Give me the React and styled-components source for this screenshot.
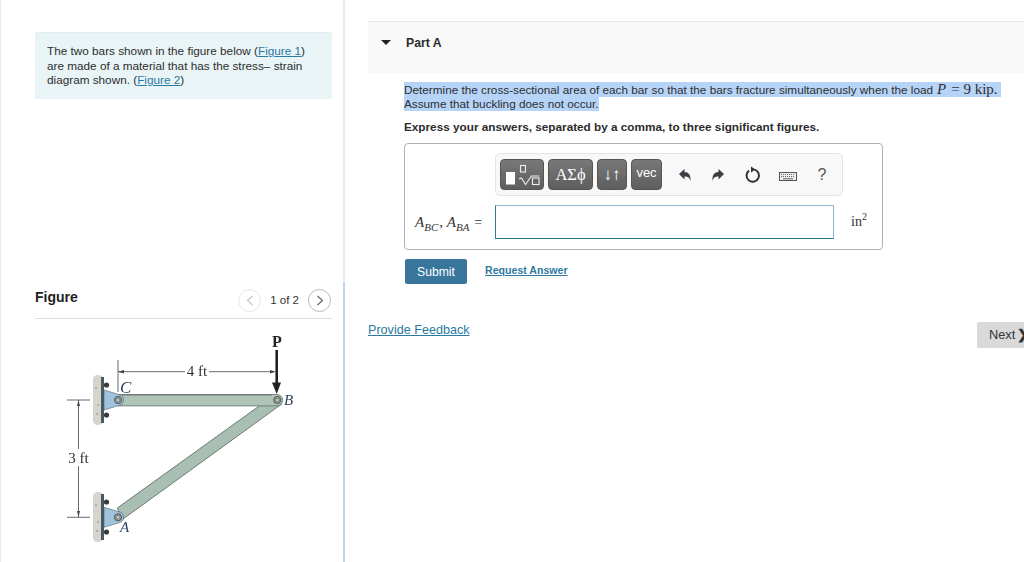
import React from 'react';
import styled, { createGlobalStyle } from 'styled-components';

const GlobalStyle = createGlobalStyle`
  html, body {
    margin: 0;
    height: 100%;
    overflow: hidden;
    background: #fff;
  }
  body {
    font-family: "Liberation Sans", Arial, sans-serif;
    color: #2e2e2e;
  }
`;

const Page = styled.div`
  display: flex;
  width: 1024px;
  height: 562px;
  overflow: hidden;
`;

const LeftPanel = styled.aside`
  box-sizing: border-box;
  width: 343px;
  flex: none;
  padding: 32px 11px 0 34px;
  border-left: 1px solid #e8ebee;
`;

const Divider = styled.div`
  width: 2px;
  flex: none;
  background: linear-gradient(#e8eef4 282px, #c3d4e4 282px);
`;

const Intro = styled.div`
  box-sizing: border-box;
  height: 67px;
  padding: 11px 12px 0;
  background: #e8f4f6;
  border-top: 1px solid #e2eef1;
  font-size: 11.75px;
  line-height: 14.5px;
  white-space: nowrap;
`;

const TextLink = styled.a`
  color: #2a7aa3;
  text-decoration: underline;
`;

const FigureHead = styled.div`
  display: flex;
  align-items: center;
  justify-content: space-between;
  height: 35px;
  margin-top: 182px;
  padding-bottom: 2px;
  border-bottom: 1px solid #dedede;
`;

const FigureTitle = styled.h2`
  margin: 0 0 4px;
  font-size: 14px;
  font-weight: 700;
  color: #222;
`;

const Pager = styled.div`
  display: flex;
  align-items: center;
  gap: 9px;
  margin: 3px 1px 0 0;
  font-size: 11.5px;
  color: #333;
`;

const PagerButton = styled.span`
  display: flex;
  align-items: center;
  justify-content: center;
  width: 23px;
  height: 23px;
  box-sizing: border-box;
  border-radius: 50%;
  border: 1px solid ${(p) => (p.$disabled ? '#e4e4e4' : '#b9b9b9')};
  color: ${(p) => (p.$disabled ? '#c4c4c4' : '#666')};
`;

const Diagram = styled.svg`
  display: block;
  width: 260px;
  height: 232px;
  margin: 11px 0 0 5px;
  filter: blur(0.4px);
`;

const RightPanel = styled.main`
  flex: 1;
  min-width: 0;
  padding: 21px 0 0 23px;
`;

const PartHeader = styled.div`
  display: flex;
  align-items: center;
  gap: 15px;
  padding: 0 0 10px 13px;
  box-sizing: border-box;
  height: 52px;
  background: #f9f9f9;
  border-top: 1px solid #e6e6e6;
`;

const Caret = styled.span`
  width: 0;
  height: 0;
  border-left: 5px solid transparent;
  border-right: 5px solid transparent;
  border-top: 5px solid #222;
`;

const PartTitle = styled.h3`
  margin: 0;
  font-size: 12.2px;
  font-weight: 700;
  color: #2b2b2b;
`;

const PartBody = styled.div`
  padding: 9px 0 0 36px;
  width: 600px;
`;

const Question = styled.p`
  margin: 0;
  width: 620px;
  font-size: 11.75px;
  line-height: 14px;
  white-space: nowrap;
`;

const Selected = styled.span`
  background: #b6d4f8;
  padding: 1px 0;
`;

const MathVar = styled.span`
  font-family: "Liberation Serif", serif;
  font-style: ${(p) => (p.$italic ? 'italic' : 'normal')};
  font-size: 15px;
  margin-left: ${(p) => p.$gap || 0}px;
  padding-right: ${(p) => p.$tail || 0}px;
`;

const Instruction = styled.p`
  margin: 9px 0 0;
  font-size: 11.75px;
  line-height: 14px;
  font-weight: 700;
  color: #2b2b2b;
`;

const AnswerBox = styled.div`
  box-sizing: border-box;
  width: 479px;
  height: 107px;
  margin-top: 9px;
  padding: 9px 14px 0 10px;
  border: 1px solid #b0b0b0;
  border-radius: 4px;
`;

const Toolbar = styled.div`
  box-sizing: border-box;
  display: flex;
  align-items: center;
  width: 348px;
  height: 43px;
  margin-left: 80px;
  padding: 0 4px;
  gap: 4px;
  background: #f8f8f8;
  border: 1px solid #e4e4e4;
  border-radius: 5px;
`;

const ToolButton = styled.span`
  box-sizing: border-box;
  display: flex;
  flex: none;
  align-items: ${(p) => (p.$high ? 'flex-start' : 'center')};
  justify-content: center;
  width: ${(p) => p.$w}px;
  height: 31px;
  padding-top: ${(p) => (p.$high ? 5 : 0)}px;
  border-radius: 4px;
  border: 1px solid #555;
  background: linear-gradient(#787878, #5e5e5e);
  color: #fff;
  font-family: ${(p) => (p.$serif ? '"Liberation Serif", serif' : '"Liberation Sans", sans-serif')};
  font-size: ${(p) => p.$size || 13}px;
`;

const IconSlot = styled.span`
  display: flex;
  flex: none;
  align-items: center;
  justify-content: center;
  width: ${(p) => p.$w}px;
  height: 31px;
  color: #555;
  font-size: 16px;
`;

const KeyboardGlyph = styled.svg`
  margin-top: 4px;
`;

const AnswerRow = styled.div`
  display: flex;
  align-items: center;
  margin-top: 9px;
`;

const AnswerLabel = styled.label`
  width: 80px;
  flex: none;
  white-space: nowrap;
  font-family: "Liberation Serif", serif;
  font-size: 15px;
  color: #333;
`;

const Sub = styled.sub`
  font-size: 11px;
  font-style: italic;
  line-height: 0;
  margin-right: ${(p) => p.$gap || 0}px;
`;

const Eq = styled.span`
  font-size: 14px;
  margin-left: 5px;
`;

const AnswerInput = styled.div`
  box-sizing: border-box;
  width: 339px;
  height: 34px;
  border: 1px solid #2f7a9c;
  border-top-color: #8fb7ca;
  border-right-color: #8fb7ca;
`;

const Unit = styled.span`
  margin-left: 17px;
  font-family: "Liberation Serif", serif;
  font-size: 14px;
  color: #333;
  sup {
    font-size: 10px;
    line-height: 0;
  }
`;

const Actions = styled.div`
  display: flex;
  align-items: center;
  gap: 18px;
  margin-top: 9px;
  margin-left: 1px;
`;

const SubmitButton = styled.button`
  width: 62px;
  height: 25px;
  padding: 0;
  border: 0;
  border-radius: 2px;
  background: #38779b;
  color: #fff;
  font-family: inherit;
  font-size: 12.2px;
`;

const RequestLink = styled.a`
  margin-bottom: 3px;
  color: #2f7a9f;
  font-size: 10.6px;
  font-weight: 700;
  text-decoration: underline;
`;

const FooterRow = styled.div`
  display: flex;
  align-items: flex-start;
  justify-content: space-between;
  margin-top: 38px;
  margin-right: -6px;
`;

const FeedbackLink = styled(TextLink)`
  font-size: 12.6px;
  line-height: 17px;
`;

const NextButton = styled.span`
  box-sizing: border-box;
  display: block;
  width: 53px;
  height: 26px;
  padding-left: 12px;
  border-radius: 2px;
  background: #d9d9d9;
  font-size: 12.8px;
  line-height: 26px;
  color: #333;
  white-space: nowrap;
`;

const NextMark = styled.b`
  margin-left: 2px;
`;

const Wall = ({ y }) => (
  <g>
    <rect x="93" y={y - 25} width="10" height="50" rx="4.5" fill="#d6d5cd" />
    <rect x="101" y={y - 23} width="3" height="46" fill="#4a5862" />
    <circle cx="96" cy={y - 12} r="1" fill="#a5a5a0" />
    <circle cx="98" cy={y + 5} r="1" fill="#a5a5a0" />
    <circle cx="97" cy={y + 14} r="1" fill="#a5a5a0" />
    <circle cx="106.5" cy={y - 15} r="2.6" fill="#3a3a3a" />
    <circle cx="106.5" cy={y + 15} r="2.6" fill="#3a3a3a" />
  </g>
);

const Bracket = ({ y }) => (
  <path
    d={`M104 ${y - 10} L119.5 ${y - 5.3} A5.5 5.5 0 0 1 119.5 ${y + 5.3} L104 ${y + 10} Z`}
    fill="#9fc3dc"
    stroke="#4d5c66"
    strokeWidth="0.6"
  />
);

const Pin = ({ x, y }) => (
  <g>
    <circle cx={x} cy={y} r="3.6" fill="#8e9793" stroke="#3f4a47" strokeWidth="0.8" />
    <circle cx={x} cy={y} r="1.5" fill="#dde2df" stroke="#444" strokeWidth="0.4" />
  </g>
);

const Label = styled.text`
  font-family: "Liberation Serif", serif;
  font-size: ${(p) => p.$size || 14}px;
  font-style: ${(p) => (p.$italic ? 'italic' : 'normal')};
  font-weight: ${(p) => (p.$bold ? 700 : 400)};
  fill: ${(p) => p.$color || '#333'};
`;

const TrussFigure = () => (
  <Diagram viewBox="40 330 260 232" aria-label="Truss">
    <Wall y={400} />
    <Wall y={517} />
    {/* bar BA */}
    <path d="M117.3 508 L262 404 L281.7 404 L122.7 519.3 Z" fill="#a9bfb3" stroke="#56625c" strokeWidth="0.8" />
    {/* bar CB */}
    <path d="M118 394.5 H277 A5.7 5.7 0 0 1 277 405.9 H118 Z" fill="#b0c4b8" stroke="#66706b" strokeWidth="0.8" />
    <path d="M122 394.8 H272" stroke="#6f7a75" strokeWidth="1.2" />
    <Bracket y={400} />
    <Bracket y={517.3} />
    <Pin x={118} y={400} />
    <Pin x={118} y={517.3} />
    <Pin x={277.3} y={400} />

    {/* dimensions */}
    <g stroke="#444" strokeWidth="0.8" fill="none">
      <path d="M118 360 V392" />
      <path d="M118 371.7 H185 M209 371.7 H274" />
      <path d="M67 400 H90" />
      <path d="M67 517.3 H90" />
      <path d="M78.5 400 V449 M78.5 466 V517" />
    </g>
    <g fill="#444">
      <path d="M118 371.7 L124 370 V373.4 Z" />
      <path d="M276 371.7 L270 370 V373.4 Z" />
      <path d="M78.5 400 L77 406 H80 Z" />
      <path d="M78.5 517.3 L77 511 H80 Z" />
    </g>

    {/* load */}
    <path d="M276.7 350 V385" stroke="#222" strokeWidth="2.6" />
    <path d="M272 382.5 H281 L276.7 394 Z" fill="#222" />

    <Label x="277" y="346.5" $bold $size={16} textAnchor="middle" $color="#222">P</Label>
    <Label x="197" y="376" $size={15} textAnchor="middle">4 ft</Label>
    <Label x="78.5" y="463" $size={15} textAnchor="middle">3 ft</Label>
    <Label x="120" y="393" $italic $size={17} $color="#2a3f5f">C</Label>
    <Label x="284" y="405" $italic $size={15} $color="#2a3f5f">B</Label>
    <Label x="120" y="532" $italic $size={15} $color="#2a3f5f">A</Label>
  </Diagram>
);

const TemplateIcon = () => (
  <svg width="38" height="22" viewBox="0 0 38 22" fill="none">
    <rect x="3" y="8" width="9" height="12.5" fill="#fff" />
    <rect x="17.5" y="1.5" width="5" height="6.5" stroke="#eee" strokeWidth="1.1" />
    <path d="M16 15 L18.5 14 L22.5 20.5 L28.5 12 H36.5" stroke="#eee" strokeWidth="1.1" />
    <rect x="29.5" y="14" width="6.5" height="6.5" stroke="#eee" strokeWidth="1.1" />
  </svg>
);

const UndoIcon = ({ flip }) => (
  <svg width="14" height="14" viewBox="0 0 14 14" style={flip ? { transform: 'scaleX(-1)' } : undefined}>
    <path d="M1 6 L6.5 1 V4 C10.5 4 13 7 12.5 13 C11.5 9.5 10 8.5 6.5 8.5 V11.5 Z" fill="#3a3f45" />
  </svg>
);

const ResetIcon = () => (
  <svg width="16" height="18" viewBox="0 0 16 18" fill="none">
    <path d="M9.5 3.6 A6.2 6.2 0 1 1 4 4.6" stroke="#333" strokeWidth="2" />
    <path d="M6 0.5 L10.5 3.6 L6 6.5 Z" fill="#333" />
  </svg>
);

const KeyboardIcon = () => (
  <KeyboardGlyph width="18" height="9" viewBox="0 0 18 9" fill="none">
    <rect x="0.5" y="0.5" width="17" height="8" stroke="#555" fill="#eee" />
    <path d="M2 2.5 H16 M2 4.5 H16" stroke="#666" strokeWidth="1" strokeDasharray="1 1" />
    <path d="M4 6.8 H14" stroke="#666" strokeWidth="1" />
  </KeyboardGlyph>
);

const Chevron = ({ left }) => (
  <svg width="8" height="11" viewBox="0 0 8 11" fill="none">
    <path d={left ? 'M6.5 1 L1.5 5.5 L6.5 10' : 'M1.5 1 L6.5 5.5 L1.5 10'} stroke="currentColor" strokeWidth="1.2" />
  </svg>
);

export default function App() {
  return (
    <>
      <GlobalStyle />
      <Page>
        <LeftPanel>
          <Intro>
            The two bars shown in the figure below (<TextLink>Figure 1</TextLink>)
            <br />
            are made of a material that has the stress– strain
            <br />
            diagram shown. (<TextLink>Figure 2</TextLink>)
          </Intro>
          <FigureHead>
            <FigureTitle>Figure</FigureTitle>
            <Pager>
              <PagerButton $disabled><Chevron left /></PagerButton>
              <span>1 of 2</span>
              <PagerButton><Chevron /></PagerButton>
            </Pager>
          </FigureHead>
          <TrussFigure />
        </LeftPanel>
        <Divider />
        <RightPanel>
          <PartHeader>
            <Caret />
            <PartTitle>Part A</PartTitle>
          </PartHeader>
          <PartBody>
            <Question>
              <Selected>
                Determine the cross-sectional area of each bar so that the bars fracture simultaneously when the load
                <MathVar $italic $gap={4}>P</MathVar>
                <MathVar $gap={5} $tail={3}>= 9 kip.</MathVar>
              </Selected>
              <br />
              <Selected>Assume that buckling does not occur.</Selected>
            </Question>
            <Instruction>Express your answers, separated by a comma, to three significant figures.</Instruction>
            <AnswerBox>
              <Toolbar>
                <ToolButton $w={44}><TemplateIcon /></ToolButton>
                <ToolButton $w={45} $serif $size={16.5}>ΑΣϕ</ToolButton>
                <ToolButton $w={30} $serif $size={17}>↓↑</ToolButton>
                <ToolButton $w={31} $size={13} $high>vec</ToolButton>
                <IconSlot $w={38}><UndoIcon /></IconSlot>
                <IconSlot $w={20}><UndoIcon flip /></IconSlot>
                <IconSlot $w={42}><ResetIcon /></IconSlot>
                <IconSlot $w={20}><KeyboardIcon /></IconSlot>
                <IconSlot $w={40}>?</IconSlot>
              </Toolbar>
              <AnswerRow>
                <AnswerLabel>
                  <i>A</i><Sub $gap={1}>BC</Sub>, <i>A</i><Sub>BA</Sub><Eq>=</Eq>
                </AnswerLabel>
                <AnswerInput />
                <Unit>in<sup>2</sup></Unit>
              </AnswerRow>
            </AnswerBox>
            <Actions>
              <SubmitButton>Submit</SubmitButton>
              <RequestLink>Request Answer</RequestLink>
            </Actions>
          </PartBody>
          <FooterRow>
            <FeedbackLink>Provide Feedback</FeedbackLink>
            <NextButton>Next<NextMark>❯</NextMark></NextButton>
          </FooterRow>
        </RightPanel>
      </Page>
    </>
  );
}
